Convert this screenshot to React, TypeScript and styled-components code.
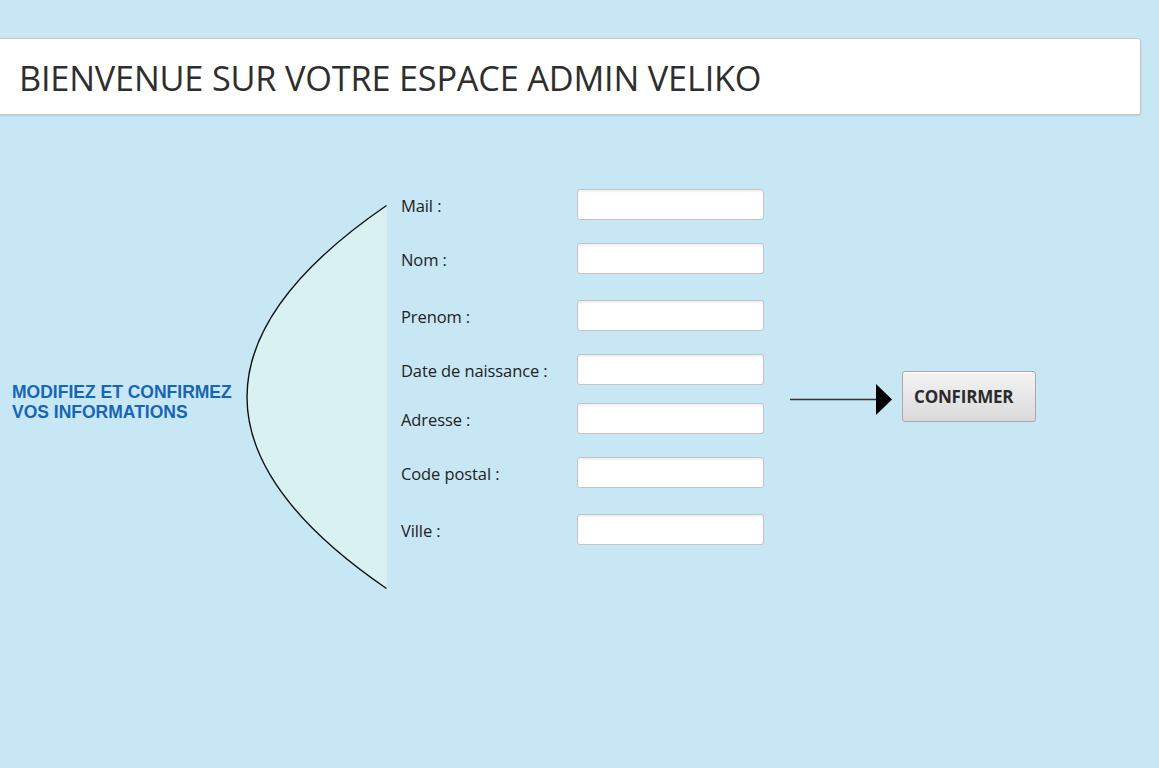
import React from "react";
import styled, { createGlobalStyle } from "styled-components";

const Global = createGlobalStyle`
  html, body { margin: 0; padding: 0; background: #c8e7f4; }
  body { font-family: "Open Sans", "Noto Sans", sans-serif; overflow: hidden; }
  #root { width: 1159px; height: 768px; }
`;

const Page = styled.div`
  width: 1159px;
  height: 768px;
  background: #c8e7f4;
  padding-top: 38px;
  box-sizing: border-box;
`;

const Header = styled.header`
  margin-left: -6px;
  width: 1147px;
  height: 77px;
  box-sizing: border-box;
  background: #ffffff;
  border: 1px solid #c6c6c6;
  border-radius: 3px;
  box-shadow: 0 1px 2px rgba(0, 0, 0, 0.12);
  display: flex;
  align-items: center;
  padding-left: 24px;
`;

const Title = styled.h1`
  margin: 0;
  font-family: "Open Sans", sans-serif;
  font-weight: 400;
  font-size: 34.3px;
  color: #2e2e2e;
  letter-spacing: -0.2px;
  padding-top: 1px;
`;

const Main = styled.main`
  display: flex;
  align-items: flex-start;
`;

const Caption = styled.div`
  margin-left: 12px;
  margin-top: 267px;
  width: 234px;
  font-family: "Liberation Sans", Arial, sans-serif;
  font-weight: 700;
  font-size: 17.5px;
  line-height: 20px;
  color: #1765b6;
`;

const Curve = styled.svg`
  display: block;
  margin-top: 89px;
  flex: none;
`;

const Form = styled.div`
  margin-left: 13px;
  margin-top: 74px;
  display: flex;
  flex-direction: column;
`;

const Row = styled.div<{ $gap: number }>`
  display: flex;
  align-items: center;
  margin-top: ${(p) => p.$gap}px;
`;

const Label = styled.label`
  width: 176px;
  font-family: "Open Sans", sans-serif;
  font-size: 16.5px;
  letter-spacing: -0.1px;
  color: #222;
  padding-top: 2px;
`;

const Input = styled.input`
  width: 187px;
  height: 31px;
  box-sizing: border-box;
  border: 1px solid #c3c3c3;
  border-radius: 3px;
  background: #fff;
  box-shadow: inset 0 2px 2px rgba(0, 0, 0, 0.06);
  outline: none;
`;

const Arrow = styled.svg`
  display: block;
  margin-left: 26px;
  margin-top: 268px;
  flex: none;
`;

const Button = styled.button`
  margin-left: 8px;
  margin-top: 256px;
  width: 134px;
  height: 51px;
  box-sizing: border-box;
  border: 1px solid #a9a9a9;
  border-radius: 3px;
  background: linear-gradient(#f3f3f3, #dadada);
  box-shadow: inset 0 1px 0 #fff;
  font-family: "Open Sans", sans-serif;
  font-weight: 700;
  font-size: 17px;
  letter-spacing: -0.2px;
  color: #2b2b2b;
  cursor: pointer;
  text-align: left;
  padding: 0 0 0 11px;
`;

const fields: { label: string; gap: number }[] = [
  { label: "Mail :", gap: 0 },
  { label: "Nom :", gap: 23 },
  { label: "Prenom :", gap: 26 },
  { label: "Date de naissance :", gap: 23 },
  { label: "Adresse :", gap: 18 },
  { label: "Code postal :", gap: 23 },
  { label: "Ville :", gap: 26 },
];

export default function App() {
  return (
    <Page>
      <Global />
      <Header>
        <Title>BIENVENUE SUR VOTRE ESPACE ADMIN VELIKO</Title>
      </Header>
      <Main>
        <Caption>
          MODIFIEZ ET CONFIRMEZ
          <br />
          VOS INFORMATIONS
        </Caption>
        <Curve width="142" height="386" viewBox="0 0 142 386">
          <path
            d="M140.5 1.5 Q -138.5 193 140.5 384.5 Z"
            fill="#d9f2f1"
            stroke="none"
          />
          <path
            d="M140.5 1.5 Q -138.5 193 140.5 384.5"
            fill="none"
            stroke="#111"
            strokeWidth="1.4"
          />
        </Curve>
        <Form>
          {fields.map((f) => (
            <Row key={f.label} $gap={f.gap}>
              <Label>{f.label}</Label>
              <Input type="text" />
            </Row>
          ))}
        </Form>
        <Arrow width="104" height="33" viewBox="0 0 104 33">
          <line x1="0" y1="16.5" x2="88" y2="16.5" stroke="#333" strokeWidth="1.5" />
          <polygon points="86,1 102,16.5 86,32" fill="#000" />
        </Arrow>
        <Button>CONFIRMER</Button>
      </Main>
    </Page>
  );
}
